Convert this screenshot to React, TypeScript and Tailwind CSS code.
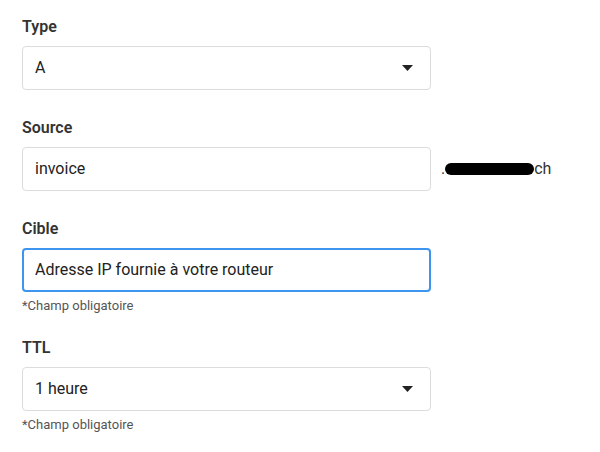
import React from 'react';

const Caret = () => (
  <svg width="11" height="6" viewBox="0 0 11 6" className="shrink-0">
    <path d="M0 0 L11 0 L5.5 6 Z" fill="#222" />
  </svg>
);

const Label = ({ children }: { children: React.ReactNode }) => (
  <div className="text-[16px] leading-[20px] font-semibold text-[#333] mb-[9px]">{children}</div>
);

const Helper = () => (
  <div className="text-[13px] leading-[16px] text-[#555] mt-[6px]">*Champ obligatoire</div>
);

const SelectBox = ({ value }: { value: string }) => (
  <div className="w-[409px] h-[44px] border border-[#dcdcdc] rounded-[4px] flex items-center justify-between pl-[12px] pr-[17px] text-[16px] text-[#222]">
    <span>{value}</span>
    <Caret />
  </div>
);

const App = () => {
  return (
    <div className="w-[600px] h-[452px] bg-white pl-[22px] pt-[17px] font-['Roboto',sans-serif]">
      <div className="flex flex-col">
        <Label>Type</Label>
        <SelectBox value="A" />

        <div className="mt-[28px]">
          <Label>Source</Label>
          <div className="flex items-center">
            <div className="w-[409px] h-[44px] border border-[#dcdcdc] rounded-[4px] flex items-center pl-[12px] text-[16px] text-[#222]">
              invoice
            </div>
            <div className="ml-[10px] flex items-center text-[16px] text-[#333]">
              <span>.</span>
              <span className="inline-block w-[89px] h-[12px] rounded-full bg-black" />
              <span>ch</span>
            </div>
          </div>
        </div>

        <div className="mt-[28px]">
          <Label>Cible</Label>
          <div className="w-[409px] h-[44px] border-2 border-[#3d95ef] rounded-[4px] flex items-center pl-[11px] text-[16px] text-[#222]">
            Adresse IP fournie à votre routeur
          </div>
          <Helper />
        </div>

        <div className="mt-[24px]">
          <Label>TTL</Label>
          <SelectBox value="1 heure" />
          <Helper />
        </div>
      </div>
    </div>
  );
};

export default App;
